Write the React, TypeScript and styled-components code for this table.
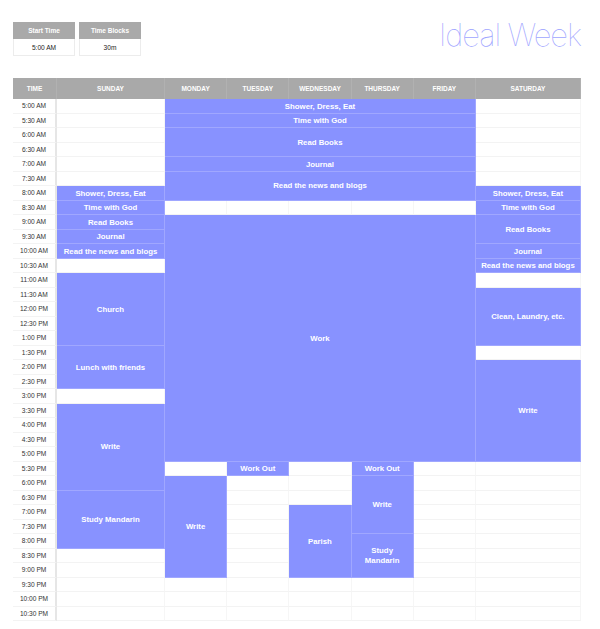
import React from "react";
import styled, { createGlobalStyle } from "styled-components";

const GlobalStyle = createGlobalStyle`
  html, body { margin: 0; padding: 0; background: #ffffff; }
  body { font-family: "Liberation Sans", Arial, sans-serif; -webkit-font-smoothing: antialiased; }
`;

const Page = styled.div`
  width: 600px;
  padding: 22px 19px 0 13px;
  box-sizing: border-box;
`;

const TopBar = styled.div`
  display: flex;
  justify-content: space-between;
  align-items: flex-start;
  height: 56px;
`;

const Settings = styled.div`
  display: flex;
  gap: 4px;
`;

const SettingBox = styled.div`
  width: 62px;
  display: flex;
  flex-direction: column;
`;

const SettingLabel = styled.div`
  height: 17px;
  background: #a9a9a9;
  color: #ffffff;
  font-size: 6.5px;
  font-weight: 700;
  display: flex;
  align-items: center;
  justify-content: center;
`;

const SettingValue = styled.div`
  height: 16px;
  border: 1px solid #ececec;
  border-top: none;
  color: #222;
  font-size: 6.6px;
  display: flex;
  align-items: center;
  justify-content: center;
`;

const Title = styled.h1`
  margin: -5px 0 0 0;
  font-family: "Inter", "Liberation Sans", sans-serif;
  font-weight: 100;
  font-size: 31px;
  letter-spacing: -1.1px;
  color: #9fa6ff;
  line-height: 36px;
`;

const Grid = styled.div`
  display: grid;
  grid-template-columns: 44px 108px repeat(5, 62.2px) 105px;
  grid-template-rows: 21px repeat(36, 14.5px);
  width: 568px;
`;

const HeadCell = styled.div`
  background: #a9a9a9;
  color: #ffffff;
  font-size: 6.5px;
  font-weight: 700;
  text-transform: uppercase;
  display: flex;
  align-items: center;
  justify-content: center;
  border-right: 1px solid #b1b1b1;
  &:last-child { border-right: none; }
`;

const TimeCell = styled.div`
  border-right: 2px solid #e6e6e6;
  border-bottom: 1px solid #f3f3f3;
  color: #333;
  font-size: 6.6px;
  display: flex;
  align-items: center;
  justify-content: center;
  box-sizing: border-box;
`;

const EmptyCell = styled.div`
  background: #ffffff;
  border-right: 1px solid #f6f6f6;
  border-bottom: 1px solid #f3f3f3;
  box-sizing: border-box;
`;

const Event = styled.div`
  background: #8892ff;
  border-right: 1px solid #a0a7ff;
  border-bottom: 1px solid #a0a7ff;
  box-sizing: border-box;
  color: #ffffff;
  font-size: 7.8px;
  font-weight: 700;
  line-height: 9.5px;
  text-align: center;
  display: flex;
  align-items: center;
  justify-content: center;
  padding: 1px 4px 0;
  overflow: hidden;
`;

const days = ["Sunday", "Monday", "Tuesday", "Wednesday", "Thursday", "Friday", "Saturday"];

const times: string[] = [];
for (let i = 0; i < 36; i++) {
  const mins = 5 * 60 + i * 30;
  const h24 = Math.floor(mins / 60);
  const m = mins % 60;
  const ampm = h24 >= 12 ? "PM" : "AM";
  let h = h24 % 12;
  if (h === 0) h = 12;
  times.push(`${h}:${m === 0 ? "00" : "30"} ${ampm}`);
}

// day: 0=Sunday..6=Saturday; span in days
type Ev = { title: string; day: number; days?: number; row: number; rows?: number };

const events: Ev[] = [
  { title: "Shower, Dress, Eat", day: 1, days: 5, row: 0 },
  { title: "Time with God", day: 1, days: 5, row: 1 },
  { title: "Read Books", day: 1, days: 5, row: 2, rows: 2 },
  { title: "Journal", day: 1, days: 5, row: 4 },
  { title: "Read the news and blogs", day: 1, days: 5, row: 5, rows: 2 },
  { title: "Work", day: 1, days: 5, row: 8, rows: 17 },

  { title: "Shower, Dress, Eat", day: 0, row: 6 },
  { title: "Time with God", day: 0, row: 7 },
  { title: "Read Books", day: 0, row: 8 },
  { title: "Journal", day: 0, row: 9 },
  { title: "Read the news and blogs", day: 0, row: 10 },
  { title: "Church", day: 0, row: 12, rows: 5 },
  { title: "Lunch with friends", day: 0, row: 17, rows: 3 },
  { title: "Write", day: 0, row: 21, rows: 6 },
  { title: "Study Mandarin", day: 0, row: 27, rows: 4 },

  { title: "Shower, Dress, Eat", day: 6, row: 6 },
  { title: "Time with God", day: 6, row: 7 },
  { title: "Read Books", day: 6, row: 8, rows: 2 },
  { title: "Journal", day: 6, row: 10 },
  { title: "Read the news and blogs", day: 6, row: 11 },
  { title: "Clean, Laundry, etc.", day: 6, row: 13, rows: 4 },
  { title: "Write", day: 6, row: 18, rows: 7 },

  { title: "Write", day: 1, row: 26, rows: 7 },
  { title: "Work Out", day: 2, row: 25 },
  { title: "Parish", day: 3, row: 28, rows: 5 },
  { title: "Work Out", day: 4, row: 25 },
  { title: "Write", day: 4, row: 26, rows: 4 },
  { title: "Study Mandarin", day: 4, row: 30, rows: 3 },
];

const occupied: boolean[][] = Array.from({ length: 7 }, () => Array(36).fill(false));
events.forEach((e) => {
  for (let d = e.day; d < e.day + (e.days ?? 1); d++) {
    for (let r = e.row; r < e.row + (e.rows ?? 1); r++) occupied[d][r] = true;
  }
});

export default function App() {
  return (
    <>
      <GlobalStyle />
      <Page>
        <TopBar>
          <Settings>
            <SettingBox>
              <SettingLabel>Start Time</SettingLabel>
              <SettingValue>5:00 AM</SettingValue>
            </SettingBox>
            <SettingBox>
              <SettingLabel>Time Blocks</SettingLabel>
              <SettingValue>30m</SettingValue>
            </SettingBox>
          </Settings>
          <Title>Ideal Week</Title>
        </TopBar>
        <Grid>
          <HeadCell>Time</HeadCell>
          {days.map((d) => (
            <HeadCell key={d}>{d}</HeadCell>
          ))}
          {times.map((t, i) => (
            <TimeCell key={t} style={{ gridRow: i + 2, gridColumn: 1 }}>
              {t}
            </TimeCell>
          ))}
          {occupied.map((col, d) =>
            col.map((occ, r) =>
              occ ? null : (
                <EmptyCell key={`e-${d}-${r}`} style={{ gridRow: r + 2, gridColumn: d + 2 }} />
              )
            )
          )}
          {events.map((e, i) => (
            <Event
              key={i}
              style={{
                gridRow: `${e.row + 2} / span ${e.rows ?? 1}`,
                gridColumn: `${e.day + 2} / span ${e.days ?? 1}`,
              }}
            >
              {e.title}
            </Event>
          ))}
        </Grid>
      </Page>
    </>
  );
}
